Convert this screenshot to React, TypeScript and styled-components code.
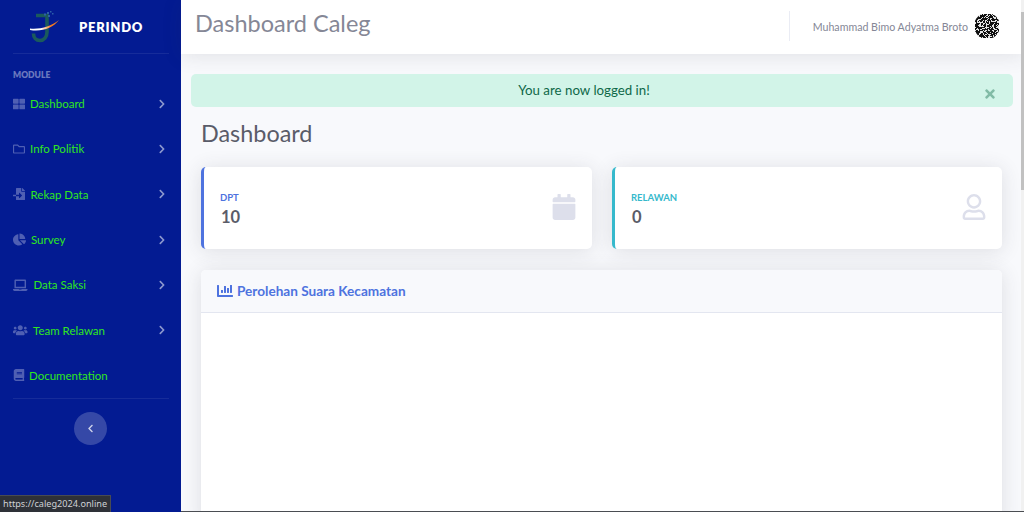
import React from 'react';
import styled, { createGlobalStyle } from 'styled-components';
import {
  FaBook,
  FaCalendar,
  FaChartBar,
  FaChartPie,
  FaChevronLeft,
  FaChevronRight,
  FaFileImport,
  FaLaptop,
  FaRegFolder,
  FaRegUser,
  FaThLarge,
  FaTimes,
  FaUsers,
} from 'react-icons/fa';

const GlobalStyle = createGlobalStyle`
  html, body {
    margin: 0;
    height: 100%;
    overflow: hidden;
  }
  body {
    font-family: 'Lato', 'Open Sans', sans-serif;
    background: #f8f9fc;
  }
  * {
    box-sizing: border-box;
  }
`;

const Page = styled.div`
  display: flex;
  width: 1024px;
  height: 512px;
  overflow: hidden;
  position: relative;
`;

const Sidebar = styled.aside`
  flex: 0 0 181px;
  background: #031b92;
  padding: 0 12px 0 13px;
  display: flex;
  flex-direction: column;
`;

const Brand = styled.div`
  height: 54px;
  display: flex;
  align-items: center;
  gap: 19px;
  padding-left: 17px;
  color: #fff;
  font-weight: 800;
  font-size: 13px;
  letter-spacing: 0.75px;
  border-bottom: 1px solid rgba(255, 255, 255, 0.08);
`;

const SectionLabel = styled.div`
  font-size: 8.5px;
  font-weight: 800;
  color: rgba(255, 255, 255, 0.42);
  margin-top: 16px;
  height: 11px;
  line-height: 11px;
`;

const NavList = styled.nav`
  display: flex;
  flex-direction: column;
`;

const NavItem = styled.div`
  height: 45.3px;
  display: flex;
  align-items: center;
  font-size: 11.5px;
  color: #2fe81d;
`;

const NavIcon = styled.span<{ $slot: number; $size: number }>`
  width: ${(p) => p.$slot}px;
  flex: none;
  display: flex;
  color: rgba(255, 255, 255, 0.3);
  font-size: ${(p) => p.$size}px;
`;

const NavLabel = styled.span`
  flex: 1;
`;

const NavArrow = styled.span`
  display: flex;
  margin-right: 2px;
  color: rgba(255, 255, 255, 0.55);
  font-size: 10px;
`;

const SidebarRule = styled.div`
  border-top: 1px solid rgba(255, 255, 255, 0.08);
`;

const Toggle = styled.div`
  width: 33px;
  height: 33px;
  margin: 13px 0 0 61px;
  border-radius: 50%;
  background: rgba(255, 255, 255, 0.2);
  color: rgba(255, 255, 255, 0.75);
  display: flex;
  align-items: center;
  justify-content: center;
  font-size: 9px;
`;

const Main = styled.main`
  flex: 1;
  min-width: 0;
  display: flex;
  flex-direction: column;
`;

const Topbar = styled.header`
  height: 54px;
  flex: none;
  background: #fff;
  display: flex;
  align-items: center;
  padding: 0 25px 0 14px;
  box-shadow: 0 2px 20px rgba(58, 59, 69, 0.12);
  position: relative;
`;

const PageTitle = styled.h1`
  flex: 1;
  margin: 0 0 8px;
  font-size: 23.5px;
  font-weight: 400;
  color: #858796;
`;

const UserBox = styled.div`
  height: 30px;
  margin-bottom: 2px;
  display: flex;
  align-items: center;
  gap: 7px;
  padding-left: 23px;
  border-left: 1px solid #eaecf4;
  font-size: 10.65px;
  color: #858796;
`;

const Content = styled.div`
  flex: 1;
  padding: 20px 11px 0 10px;
  display: flex;
  flex-direction: column;
`;

const Alert = styled.div`
  height: 33px;
  flex: none;
  border-radius: 5px;
  background: #d2f4e8;
  color: #0f6848;
  font-size: 13.3px;
  display: flex;
  align-items: center;
  justify-content: center;
  position: relative;
  padding: 0 36px 1px 0;
`;

const AlertClose = styled.span`
  position: absolute;
  right: 16px;
  top: 13px;
  display: flex;
  color: #82bba6;
  font-size: 14px;
`;

const Body = styled.div`
  padding: 0 0 0 10px;
  flex: 1;
  min-height: 0;
  display: flex;
  flex-direction: column;
`;

const Heading = styled.h2`
  margin: 12px 0 20px;
  font-size: 23.4px;
  line-height: 28px;
  font-weight: 400;
  color: #5a5c69;
`;

const CardRow = styled.div`
  display: grid;
  grid-template-columns: 391px 390px;
  gap: 20px;
`;

const StatCard = styled.div<{ $accent: string }>`
  height: 82px;
  background: #fff;
  border-left: 3.5px solid ${(p) => p.$accent};
  border-radius: 5px;
  box-shadow: 0 2px 20px rgba(58, 59, 69, 0.14);
  display: flex;
  align-items: center;
  padding: 0 15px 0 16px;
`;

const StatText = styled.div`
  flex: 1;
  padding-top: 5px;
`;

const StatLabel = styled.div<{ $accent: string }>`
  font-size: 9.5px;
  font-weight: 700;
  line-height: 12px;
  color: ${(p) => p.$accent};
`;

const StatValue = styled.div`
  font-size: 16.5px;
  font-weight: 700;
  line-height: 26px;
  padding-left: 1px;
  color: #5a5c69;
`;

const StatIcon = styled.span`
  display: flex;
  color: #dddfeb;
  font-size: 26px;
  margin-bottom: 2px;
`;

const ChartCard = styled.section`
  margin-top: 21px;
  flex: 1;
  background: #fff;
  border-radius: 5px 5px 0 0;
  box-shadow: 0 2px 20px rgba(58, 59, 69, 0.14);
  width: 801px;
`;

const ChartHeader = styled.div`
  height: 43px;
  background: #f8f9fc;
  border-bottom: 1px solid #e3e6f0;
  border-radius: 5px 5px 0 0;
  display: flex;
  align-items: center;
  gap: 4px;
  padding: 0 16px;
  font-size: 13.6px;
  font-weight: 700;
  color: #4e73df;
`;

const ChartTitle = styled.div`
  padding-top: 195px;
  text-align: center;
  font-size: 14px;
  line-height: 18px;
  color: #8a8c96;
`;

const Scrollbar = styled.div`
  position: absolute;
  right: 0;
  top: 0;
  bottom: 0;
  width: 3px;
  background: #f1f1f1;
`;

const ScrollThumb = styled.div`
  height: 178px;
  margin-top: 12px;
  background: #c1c1c1;
`;

const StatusTip = styled.div`
  position: absolute;
  left: 0;
  bottom: 0;
  height: 17px;
  padding: 0 3px;
  background: #2e3138;
  border-top: 1px solid #484b52;
  border-right: 1px solid #484b52;
  color: #d0d2d6;
  font-size: 9.15px;
  line-height: 16px;
  font-family: 'Noto Sans', sans-serif;
`;

const BottomLine = styled.div`
  position: absolute;
  left: 181px;
  right: 0;
  bottom: 0;
  height: 1px;
  background: #4a4d52;
`;

const navItems = [
  { label: 'Dashboard', icon: <FaThLarge />, slot: 17, size: 12 },
  { label: 'Info Politik', icon: <FaRegFolder />, slot: 17, size: 12 },
  { label: 'Rekap Data', icon: <FaFileImport />, slot: 17.5, size: 12 },
  { label: 'Survey', icon: <FaChartPie />, slot: 18, size: 13 },
  { label: 'Data Saksi', icon: <FaLaptop />, slot: 20.5, size: 14.5 },
  { label: 'Team Relawan', icon: <FaUsers />, slot: 20, size: 14.5 },
];

function Logo() {
  return (
    <svg width="30" height="34" viewBox="0 0 30 34" fill="none">
      <path d="M6 5.5h11V22c0 5-3 8.5-7 8.5s-6.5-3-6.5-7" stroke="#1b5a5c" strokeWidth="3.6" />
      <path d="M0 18.5c10 1 21-2 29-8.5-6 8-17 12-29 10z" fill="url(#swoosh)" />
      <g fill="#2c5fa8">
        <rect x="14" y="3.5" width="2" height="2" />
        <rect x="17" y="2" width="2" height="2" />
        <rect x="20" y="1" width="1.5" height="1.5" />
        <rect x="18" y="5" width="2" height="2" />
        <rect x="22" y="3" width="1.5" height="1.5" />
      </g>
      <defs>
        <linearGradient id="swoosh" x1="0" x2="29" y1="19" y2="11" gradientUnits="userSpaceOnUse">
          <stop offset="0.35" stopColor="#ffffff" />
          <stop offset="0.7" stopColor="#f47a1f" />
        </linearGradient>
      </defs>
    </svg>
  );
}

// noise pattern standing in for the user's QR-style avatar
function Avatar() {
  const cells = [];
  for (let y = 0; y < 24; y += 1) {
    for (let x = 0; x < 24; x += 1) {
      const hash = Math.abs(Math.sin(x * 12.9898 + y * 78.233) * 43758.5453) % 1;
      if (hash < 0.58) {
        cells.push(<rect key={`${x}-${y}`} x={x} y={y} width="1" height="1" fill="#111" />);
      }
    }
  }
  return (
    <svg width="24" height="24" viewBox="0 0 24 24">
      <clipPath id="avatarClip">
        <circle cx="12" cy="12" r="13" />
      </clipPath>
      <g clipPath="url(#avatarClip)">
        <rect width="24" height="24" fill="#e4e4e4" />
        {cells}
      </g>
    </svg>
  );
}

export default function App() {
  return (
    <Page>
      <GlobalStyle />
      <Sidebar>
        <Brand>
          <Logo />
          PERINDO
        </Brand>
        <SectionLabel>MODULE</SectionLabel>
        <NavList>
          {navItems.map((item) => (
            <NavItem key={item.label}>
              <NavIcon $slot={item.slot} $size={item.size}>
                {item.icon}
              </NavIcon>
              <NavLabel>{item.label}</NavLabel>
              <NavArrow>
                <FaChevronRight />
              </NavArrow>
            </NavItem>
          ))}
          <NavItem>
            <NavIcon $slot={16} $size={12}>
              <FaBook />
            </NavIcon>
            <NavLabel>Documentation</NavLabel>
          </NavItem>
        </NavList>
        <SidebarRule />
        <Toggle>
          <FaChevronLeft />
        </Toggle>
      </Sidebar>
      <Main>
        <Topbar>
          <PageTitle>Dashboard Caleg</PageTitle>
          <UserBox>
            Muhammad Bimo Adyatma Broto
            <Avatar />
          </UserBox>
        </Topbar>
        <Content>
          <Alert>
            You are now logged in!
            <AlertClose>
              <FaTimes />
            </AlertClose>
          </Alert>
          <Body>
            <Heading>Dashboard</Heading>
            <CardRow>
              <StatCard $accent="#4e73df">
                <StatText>
                  <StatLabel $accent="#4e73df">DPT</StatLabel>
                  <StatValue>10</StatValue>
                </StatText>
                <StatIcon>
                  <FaCalendar />
                </StatIcon>
              </StatCard>
              <StatCard $accent="#36b9cc">
                <StatText>
                  <StatLabel $accent="#36b9cc">RELAWAN</StatLabel>
                  <StatValue>0</StatValue>
                </StatText>
                <StatIcon>
                  <FaRegUser />
                </StatIcon>
              </StatCard>
            </CardRow>
            <ChartCard>
              <ChartHeader>
                <FaChartBar size={16} />
                Perolehan Suara Kecamatan
              </ChartHeader>
              <ChartTitle>Perolehan Suara Kecamatan</ChartTitle>
            </ChartCard>
          </Body>
        </Content>
      </Main>
      <Scrollbar>
        <ScrollThumb />
      </Scrollbar>
      <BottomLine />
      <StatusTip>https://caleg2024.online</StatusTip>
    </Page>
  );
}
